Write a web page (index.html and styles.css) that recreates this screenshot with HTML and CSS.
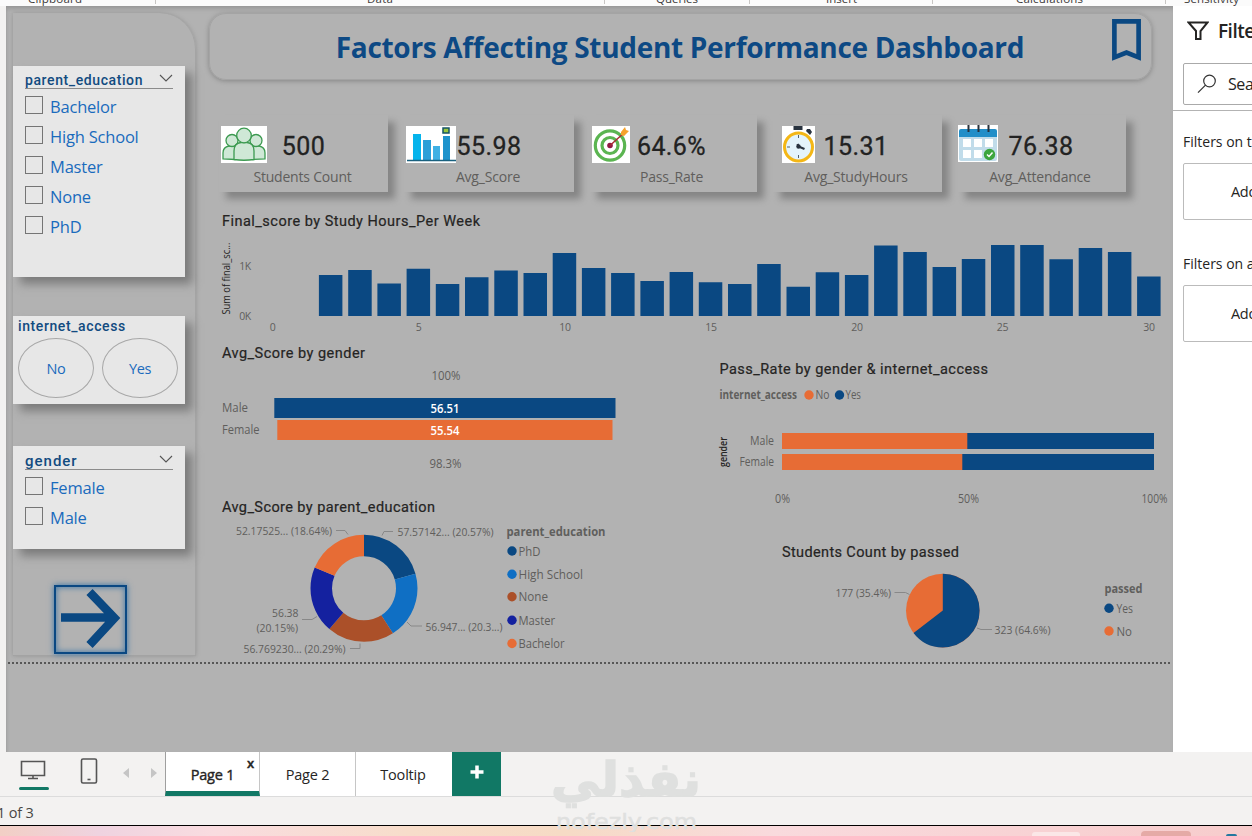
FILE: index.html
```html
<!DOCTYPE html>
<html lang="en">
<head>
<meta charset="utf-8">
<title>Factors Affecting Student Performance Dashboard</title>
<link rel="stylesheet" href="styles.css">
</head>
<body>
<div class="app">
  <svg class="ribbon" viewBox="0 0 1252 6">
    <g class="ribbon-text">
      <text x="28" y="2.500" textLength="54">Clipboard</text>
      <text x="367" y="2.500" textLength="26">Data</text>
      <text x="656" y="2.500" textLength="42">Queries</text>
      <text x="826" y="2.500" textLength="31">Insert</text>
      <text x="1016" y="2.500" textLength="67">Calculations</text>
      <text x="1184" y="2.500" textLength="55">Sensitivity</text>
    </g>
    <path class="ribbon-rule" d="M155.500 0V4M604.500 0V4M749.500 0V4M932.500 0V4M1165.500 0V4"/>
  </svg>

  <main class="workspace">
    <section class="canvas">
      <div class="page">
        <aside class="sidebar">
          <div class="slicer slicer-education">
            <div class="slicer-head"><h2>parent_education</h2>
              <svg class="chevron" viewBox="0 0 14 8"><path d="M1 1l6 6 6-6"/></svg></div>
            <label><i></i>Bachelor</label>
            <label><i></i>High School</label>
            <label><i></i>Master</label>
            <label><i></i>None</label>
            <label><i></i>PhD</label>
          </div>
          <div class="slicer slicer-internet">
            <h2>internet_access</h2>
            <div class="choices"><span>No</span><span>Yes</span></div>
          </div>
          <div class="slicer slicer-gender">
            <div class="slicer-head"><h2>gender</h2>
              <svg class="chevron" viewBox="0 0 14 8"><path d="M1 1l6 6 6-6"/></svg></div>
            <label><i></i>Female</label>
            <label><i></i>Male</label>
          </div>
          <div class="next">
            <svg viewBox="0 0 69 65"><path d="M5 30.500H57M33.500 5L58.500 31 33.500 58"/></svg>
          </div>
        </aside>

        <div class="report">
          <header class="banner">
            <h1>Factors Affecting Student Performance Dashboard</h1>
            <svg class="bookmark" viewBox="0 0 28 42" preserveAspectRatio="none"><path d="M2.300 2.300H25.700V37.500L14 32.800 2.300 37.500Z"/></svg>
          </header>

          <div class="kpis">
            <div class="kpi">
              <svg class="kpi-icon" width="46" height="37" viewBox="0 0 46 37">
                <rect width="46" height="37" fill="#fff"/>
                <g fill="#cfe8d6" stroke="#3c9a50" stroke-width="1.300">
                  <path d="M2 33V27q0-6 6-7h6v13.500zM44 33V27q0-6-6-7h-6v13.500z"/>
                  <circle cx="11" cy="14.500" r="6"/><circle cx="35" cy="14.500" r="6"/>
                  <path d="M13 33.500V25q0-8 7-8.500h6q7 .500 7 8.500v8.500q-10 1.500-20 0z"/>
                  <circle cx="23" cy="9.500" r="7.300"/>
                </g>
              </svg>
              <b>500</b><span>Students Count</span>
            </div>
            <div class="kpi">
              <svg class="kpi-icon" width="50" height="37" viewBox="0 0 50 37">
                <rect width="50" height="37" fill="#fff"/>
                <path d="M7 8h8v26H7z" fill="#05b4ec"/><path d="M17 14h8v20h-8z" fill="#2c9fd8"/>
                <path d="M27 20h7v14h-7z" fill="#3fb0e4"/><path d="M37 10h7v24h-7z" fill="#1e93cc"/>
                <path d="M1 34.500h49" stroke="#19617f" stroke-width="1.500"/>
                <path d="M37 2h6v5h-6z" fill="#9bc63b" stroke="#155365" stroke-width="1.500"/>
              </svg>
              <b>55.98</b><span>Avg_Score</span>
            </div>
            <div class="kpi kpi-rate">
              <svg class="kpi-icon" width="38" height="37" viewBox="0 0 38 37">
                <rect width="38" height="37" fill="#fff"/>
                <g fill="none" stroke="#5bb551"><circle cx="18" cy="19.500" r="14.700" stroke-width="3.200"/>
                <circle cx="18" cy="19.500" r="8" stroke-width="3.200"/></g>
                <circle cx="18" cy="19.500" r="2.800" fill="#8f1842"/>
                <path d="M18 19.500L33 6" stroke="#a92b32" stroke-width="1.500"/>
                <path d="M29 6l4-5 1 3 3 1-5 5-3-1z" fill="#f5a22b"/>
              </svg>
              <b>64.6%</b><span>Pass_Rate</span>
            </div>
            <div class="kpi kpi-hours">
              <svg class="kpi-icon" width="33" height="37" viewBox="0 0 33 37">
                <rect width="33" height="37" fill="#fff"/>
                <path d="M11.500 0h9v4h-9zM25 3l3 0 2 3-2 3-4-4z" fill="#29333f"/>
                <circle cx="16.500" cy="21" r="14" fill="#e4f4fb" stroke="#f4b716" stroke-width="3"/>
                <path d="M16.500 9v3M16.500 29v3M5 21h3" stroke="#56616b" stroke-width="1"/>
                <circle cx="16.500" cy="20.500" r="2.200" fill="#29333f"/>
                <path d="M15.500 18l1 2.500 6 2.500" fill="none" stroke="#29333f" stroke-width="2.200"/>
              </svg>
              <b>15.31</b><span>Avg_StudyHours</span>
            </div>
            <div class="kpi kpi-attendance">
              <svg class="kpi-icon" width="40" height="37" viewBox="0 0 40 37">
                <rect width="40" height="37" fill="#fff"/>
                <path d="M1 12h38v22q0 2-2 2H3q-2 0-2-2z" fill="#c1dcea"/>
                <path d="M1 12V6q0-2 2-2h34q2 0 2 2v6z" fill="#218ec8"/>
                <path d="M5 14h8v8H5zM16 14h8v8h-8zM27 14h8v8h-8zM5 25h8v8H5zM16 25h8v8h-8zM27 25h8v8h-8z" fill="#fff"/>
                <path d="M10.500 0v7M20.500 0v7M30.500 0v7" stroke="#28313b" stroke-width="2"/>
                <circle cx="31.500" cy="29.500" r="5.700" fill="#3da63e"/>
                <path d="M29 29.500l2 2 3.500-4" fill="none" stroke="#fff" stroke-width="1.500"/>
              </svg>
              <b>76.38</b><span>Avg_Attendance</span>
            </div>
          </div>

          <svg class="visual hours" viewBox="219 205 950 130">
            <text class="heading" x="222" y="226" textLength="258">Final_score by Study Hours_Per Week</text>
            <text class="axis-name" transform="translate(230 314.500) rotate(-90)" textLength="72" lengthAdjust="spacingAndGlyphs">Sum of final_sc...</text>
            <g class="tick">
              <text x="251" y="270" text-anchor="end">1K</text><text x="251" y="320" text-anchor="end">0K</text>
              <g text-anchor="middle"><text x="272.500" y="331">0</text><text x="418.500" y="331">5</text><text x="565" y="331">10</text>
              <text x="711" y="331">15</text><text x="857" y="331">20</text><text x="1002.500" y="331">25</text><text x="1149" y="331">30</text></g>
            </g>
            <path class="blue" d="M318.900 316V275h23.500v41zM348.200 316V270h23.500v46zM377.400 316V283.500h23.500v32.500zM406.600 316V268.700h23.500v47.300zM435.800 316V284h23.500v32zM465 316V277.300h23.500v38.700zM494.300 316V270.500h23.500v45.500zM523.500 316V273h23.500v43zM552.700 316V253h23.500v63zM581.900 316V268h23.500v48zM611.100 316V273h23.500v43zM640.400 316V281h23.500v35zM669.600 316V272h23.500v44zM698.800 316V282.300h23.500v33.700zM728 316V284h23.500v32zM757.200 316V264h23.500v52zM786.500 316V286.700h23.500v29.300zM815.700 316V272.300h23.500v43.700zM844.900 316V275h23.500v41zM874.100 316V245.500h23.500v70.500zM903.300 316V252h23.500v64zM932.600 316V267h23.500v49zM961.800 316V259h23.500v57zM991 316V245h23.500v71zM1020.200 316V245h23.500v71zM1049.400 316V259.300h23.500v56.700zM1078.700 316V248h23.500v68zM1107.900 316V252h23.500v64zM1137.100 316V276.500h23.500v39.500z"/>
          </svg>

          <div class="columns">
            <div class="column">
              <svg class="visual" width="481" height="155" viewBox="219 335 481 155">
                <text class="heading" x="222" y="358" textLength="143">Avg_Score by gender</text>
                <g class="label"><text x="431.500" y="380" textLength="29" lengthAdjust="spacingAndGlyphs">100%</text><text x="429.500" y="468" textLength="32" lengthAdjust="spacingAndGlyphs">98.3%</text>
                <text x="222" y="412" textLength="26" lengthAdjust="spacingAndGlyphs">Male</text><text x="222" y="434" textLength="37.500" lengthAdjust="spacingAndGlyphs">Female</text></g>
                <rect class="blue" x="274.300" y="398" width="341.200" height="20"/>
                <rect class="orange" x="277.300" y="420" width="335.200" height="20"/>
                <g class="value"><text x="430.500" y="412.500" textLength="29" lengthAdjust="spacingAndGlyphs">56.51</text><text x="430.500" y="434.500" textLength="29" lengthAdjust="spacingAndGlyphs">55.54</text></g>
              </svg>
              <svg class="visual" width="481" height="171" viewBox="219 490 481 171">
                <text class="heading" x="222" y="512" textLength="213">Avg_Score by parent_education</text>
                <g class="ring" transform="rotate(-90 364 588.300)">
                  <circle cx="364" cy="588.300" r="42.750" pathLength="100" stroke="#0a4882" stroke-dasharray="20.570 100"/>
                  <circle cx="364" cy="588.300" r="42.750" pathLength="100" stroke="#0f6fc4" stroke-dasharray="20.350 100" stroke-dashoffset="-20.570"/>
                  <circle cx="364" cy="588.300" r="42.750" pathLength="100" stroke="#ab5029" stroke-dasharray="20.290 100" stroke-dashoffset="-40.920"/>
                  <circle cx="364" cy="588.300" r="42.750" pathLength="100" stroke="#14219f" stroke-dasharray="20.150 100" stroke-dashoffset="-61.210"/>
                  <circle cx="364" cy="588.300" r="42.750" pathLength="100" stroke="#e76c35" stroke-dasharray="18.640 100" stroke-dashoffset="-81.360"/>
                </g>
                <path class="leader" d="M336 530.500h9l3 4M393 531.500h-9l-2 4M407 622l4 4h11M302 619.500h10l5-3M350 648.500h10v-5"/>
                <g class="callout">
                  <text x="236" y="535" textLength="96" lengthAdjust="spacingAndGlyphs">52.17525... (18.64%)</text>
                  <text x="397.500" y="536" textLength="96" lengthAdjust="spacingAndGlyphs">57.57142... (20.57%)</text>
                  <text x="425.500" y="631" textLength="77" lengthAdjust="spacingAndGlyphs">56.947... (20.3...)</text>
                  <text x="272" y="617" textLength="26.500" lengthAdjust="spacingAndGlyphs">56.38</text>
                  <text x="256.500" y="632" textLength="41.500" lengthAdjust="spacingAndGlyphs">(20.15%)</text>
                  <text x="243.500" y="653" textLength="102" lengthAdjust="spacingAndGlyphs">56.769230... (20.29%)</text>
                </g>
                <text class="legend-name" x="506.500" y="536" textLength="99" lengthAdjust="spacingAndGlyphs">parent_education</text>
                <g class="label"><text x="518.500" y="556" textLength="22" lengthAdjust="spacingAndGlyphs">PhD</text><text x="518.500" y="579" textLength="64.500" lengthAdjust="spacingAndGlyphs">High School</text>
                <text x="518.500" y="601" textLength="29.500" lengthAdjust="spacingAndGlyphs">None</text><text x="518.500" y="625" textLength="36.500" lengthAdjust="spacingAndGlyphs">Master</text><text x="518.500" y="648" textLength="46" lengthAdjust="spacingAndGlyphs">Bachelor</text></g>
                <circle class="blue" cx="512" cy="551" r="4.700"/><circle cx="512" cy="574.300" r="4.700" fill="#0f6fc4"/>
                <circle cx="512" cy="596.700" r="4.700" fill="#ab5029"/><circle cx="512" cy="620.300" r="4.700" fill="#14219f"/><circle class="orange" cx="512" cy="643.500" r="4.700"/>
              </svg>
            </div>
            <div class="column">
              <svg class="visual" width="469" height="180" viewBox="700 335 469 180">
                <text class="heading" x="719.500" y="374" textLength="268.500">Pass_Rate by gender &amp; internet_access</text>
                <text class="legend-name" x="719.500" y="399" textLength="77.500" lengthAdjust="spacingAndGlyphs">internet_access</text>
                <circle class="orange" cx="809" cy="395" r="4.700"/><circle class="blue" cx="839.500" cy="395" r="4.700"/>
                <g class="label"><text x="815.500" y="399" textLength="14" lengthAdjust="spacingAndGlyphs">No</text><text x="845.500" y="399" textLength="15.500" lengthAdjust="spacingAndGlyphs">Yes</text>
                <text x="750" y="445" textLength="24" lengthAdjust="spacingAndGlyphs">Male</text><text x="739.500" y="466" textLength="34.500" lengthAdjust="spacingAndGlyphs">Female</text>
                <text x="775" y="503" textLength="15" lengthAdjust="spacingAndGlyphs">0%</text><text x="958" y="503" textLength="21" lengthAdjust="spacingAndGlyphs">50%</text><text x="1141.500" y="503" textLength="26" lengthAdjust="spacingAndGlyphs">100%</text></g>
                <text class="axis-name axis-gender" transform="translate(727 467) rotate(-90)" textLength="30" lengthAdjust="spacingAndGlyphs">gender</text>
                <path class="orange" d="M782 433h186v16H782zM782 454h181v16H782z"/>
                <path class="blue" d="M967.300 433H1154v16H967.300zM962.300 454H1154v16H962.300z"/>
              </svg>
              <svg class="visual" width="469" height="146" viewBox="700 515 469 146">
                <text class="heading" x="782" y="557" textLength="177">Students Count by passed</text>
                <circle class="orange" cx="942.800" cy="610.600" r="36.800"/>
                <circle cx="942.800" cy="610.600" r="18.400" fill="none" stroke="#0a4882" stroke-width="36.800" pathLength="100" stroke-dasharray="64.600 100" transform="rotate(-90 942.800 610.600)"/>
                <path class="leader" d="M894.500 592.500h11l4 2M977 628l4 1.500h11"/>
                <g class="callout"><text x="835.500" y="597" textLength="55.500" lengthAdjust="spacingAndGlyphs">177 (35.4%)</text>
                <text x="994.500" y="634" textLength="56" lengthAdjust="spacingAndGlyphs">323 (64.6%)</text></g>
                <text class="legend-name" x="1104.500" y="593" textLength="38" lengthAdjust="spacingAndGlyphs">passed</text>
                <circle class="blue" cx="1109" cy="608.300" r="4.700"/><circle class="orange" cx="1109" cy="631" r="4.700"/>
                <g class="label"><text x="1116.500" y="613" textLength="16.500" lengthAdjust="spacingAndGlyphs">Yes</text><text x="1116.500" y="636" textLength="15.500" lengthAdjust="spacingAndGlyphs">No</text></g>
              </svg>
            </div>
          </div>
        </div>
      </div>
    </section>

    <aside class="filters">
      <div class="filters-title">
        <svg width="22" height="20" viewBox="0 0 22 20"><path d="M1.500 1.500h19l-7 8.500v8h-4.500v-8z"/></svg>
        <strong>Filters</strong>
      </div>
      <div class="search">
        <svg width="20" height="20" viewBox="0 0 20 20"><circle cx="12.500" cy="7" r="5.800"/><path d="M8.500 11.200L1 18.700"/></svg>
        <span>Search</span>
      </div>
      <p class="filters-label">Filters on this page</p>
      <div class="dropzone">Add data fields here</div>
      <p class="filters-label filters-label-all">Filters on all pages</p>
      <div class="dropzone">Add data fields here</div>
    </aside>
  </main>

  <nav class="tabs">
    <div class="views">
      <svg width="32" height="40" viewBox="0 0 32 40"><path class="stroke" d="M4.500 9.500h23v14h-23zM16 23.500v3M11 26.500h10"/><path class="underline" d="M3.500 36.500h27"/></svg>
      <svg width="18" height="28" viewBox="0 0 18 28"><rect class="stroke" x="1.500" y="2" width="15" height="24" rx="1.500"/><path class="stroke" d="M7.500 22.500h3"/></svg>
      <svg width="34" height="12" viewBox="0 0 34 12"><path class="arrow" d="M6 1v10L0 6zM28 1v10l6-5z"/></svg>
    </div>
    <div class="tab active">Page 1<em>x</em></div>
    <div class="tab">Page 2</div>
    <div class="tab tooltip-tab">Tooltip</div>
    <div class="add"><svg width="14" height="14" viewBox="0 0 14 14"><path d="M7 0.500v13M0.500 7h13"/></svg></div>
  </nav>
  <footer class="status">1 of 3</footer>
  <div class="taskbar"><i class="task-pill"></i><i class="task-button"></i><i class="task-app"></i></div>

  <svg class="watermark" width="160" height="80" viewBox="545 752 160 80">
    <text class="mark" x="551" y="796" textLength="150" lengthAdjust="spacingAndGlyphs">نفذلي</text>
    <text class="site" x="556" y="829" textLength="141" lengthAdjust="spacingAndGlyphs">nofezly.com</text>
  </svg>
</div>
</body>
</html>
```
FILE: styles.css
```css
* { box-sizing: border-box; }
body { margin: 0; background: #f3f2f1; font-family: "Open Sans", "Noto Sans", sans-serif; color: #252423; }
h1, h2, p { margin: 0; }
svg { display: block; flex: none; }
.app { position: relative; width: 1252px; height: 836px; overflow: hidden; display: flex; flex-direction: column; }

.ribbon { width: 1252px; height: 6px; background: #fbfbfb; }
.ribbon-text { font-size: 11.500px; fill: #3b3a39; }
.ribbon-rule { stroke: #c8c6c4; }

.workspace { display: flex; height: 746px; flex: none; }
.canvas { width: 1167px; margin-left: 6px; background: #b2b2b2; box-shadow: inset 0 5px 5px -3px #929292, inset 3px 0 3px -2px #a3a3a3; }
.page { display: flex; height: 658px; margin-left: 2px; width: 1162px; border-bottom: 2px dotted #575757; }

/* Slicer column */
.sidebar { width: 183px; height: 643px; margin: 7px 0 0 5px; padding-top: 53px; border-radius: 0 36px 0 0; border-right: 1px solid #a4a4a4; border-bottom: 1px solid #a3a3a3; box-shadow: 0 0 4px #959595; flex: none; }
.slicer { width: 172px; background: #e7e7e7; box-shadow: 7px 7px 9px #7c7c7c; }
.slicer h2 { font: 500 14px/18px Roboto, sans-serif; color: #124b80; letter-spacing: .6px; }
.slicer-education { height: 211px; padding: 5px 12px; }
.slicer-internet { height: 88px; margin-top: 39px; padding: 1px 5px; }
.slicer-gender { height: 103px; margin-top: 42px; padding: 6px 12px; }
.slicer-gender h2 { font-size: 15px; letter-spacing: 1px; }
.slicer-head { display: flex; justify-content: space-between; height: 18px; border-bottom: 1px solid #8b8b8b; margin-bottom: 2px; }
.chevron { width: 14px; height: 8px; margin-top: 3px; fill: none; stroke: #555; stroke-width: 1.100; }
.slicer label { display: flex; align-items: center; height: 30px; font-size: 16.500px; letter-spacing: -.2px; color: #1a6bbd; gap: 7px; }
.slicer label i { width: 18px; height: 18px; border: 1px solid #757575; margin-top: -2px; }
.choices { display: flex; gap: 8px; margin-top: 3px; }
.choices span { width: 76px; height: 60px; border: 1.500px solid #a8a8a8; border-radius: 50%; display: grid; place-items: center; font-size: 14.500px; color: #1a6bbd; letter-spacing: -.4px; }
.next { width: 73px; height: 69px; margin: 36px 0 0 41px; border: 2px solid #0a4882; box-shadow: 0 0 6px #3775a8, inset 0 0 6px #3775a8; }
.next svg { width: 69px; height: 65px; fill: none; stroke: #0a4882; stroke-width: 8.500; }

/* Report area */
.report { width: 950px; margin-left: 23px; flex: none; }
.banner { display: flex; justify-content: center; position: relative; width: 943px; height: 67px; margin: 7px 0 0 -10px; border-radius: 17px; border: 1px solid #a4a4a4; box-shadow: 0 1px 5px #858585; }
.banner h1 { font-size: 28px; line-height: 66px; font-weight: 700; color: #0d4984; white-space: nowrap; letter-spacing: -.32px; margin-left: -1px; }
.bookmark { position: absolute; right: 10px; top: 5px; width: 29px; height: 43px; fill: none; stroke: #0a4882; stroke-width: 4.500; }
.kpis { display: grid; grid-template-columns: 169px 170px 167px 169px 168px; column-gap: 16px; margin-top: 35px; }
.kpi { position: relative; height: 77px; display: flex; flex-direction: column; align-items: center; background: #b2b2b2; box-shadow: 7px 7px 7px #858585; }
.kpi b { font: 400 25px/30px Roboto, sans-serif; letter-spacing: .4px; margin-top: 17px; color: #222; -webkit-text-stroke: .3px #222; }
.kpi span { font-size: 14px; line-height: 20px; margin-top: 5px; margin-left: -2px; color: #605e5c; letter-spacing: -.2px; }
.kpi-icon { position: absolute; left: 2px; top: 11px; }
.kpi-rate b, .kpi-rate span { margin-left: -4px; }
.kpi-hours .kpi-icon { left: 9px; }
.kpi-hours b, .kpi-hours span { margin-left: -3px; }
.kpi-attendance .kpi-icon { left: 0; top: 10px; }
.kpi-attendance b { margin-left: -2px; }
.kpi-attendance span { margin-left: -4px; }
.hours { width: 950px; height: 130px; margin-top: 13px; }
.columns { display: flex; }

.heading { font: 400 14.500px Roboto, sans-serif; fill: #252423; stroke: #252423; stroke-width: .2; }
.axis-name { font: 500 10px "Open Sans", sans-serif; fill: #252423; }
.axis-gender { font-weight: 600; }
.tick { font-size: 10.500px; fill: #605e5c; letter-spacing: -.3px; }
.label { font-size: 12px; fill: #605e5c; }
.callout { font-size: 11.500px; fill: #605e5c; }
.value { font-size: 12px; font-weight: 600; fill: #fff; }
.legend-name { font-size: 12px; font-weight: 700; fill: #605f5d; }
.leader { fill: none; stroke: #888; }
.ring { fill: none; stroke-width: 21.500; }
.blue { fill: #0a4882; }
.orange { fill: #e76c35; }

/* Filters pane */
.filters { width: 79px; background: #fff; overflow: hidden; white-space: nowrap; }
.filters-title { display: flex; align-items: center; gap: 9px; height: 50px; padding-left: 14px; }
.filters-title strong { font-size: 19px; font-weight: 600; letter-spacing: -.5px; }
.filters-title svg { fill: none; stroke: #252423; stroke-width: 2; }
.search { display: flex; align-items: center; gap: 11px; width: 190px; height: 42px; margin: 7px 0 0 10px; padding-left: 13px; border: 1px solid #aaa; border-radius: 2px; font-size: 16px; letter-spacing: -.4px; }
.search svg { fill: none; stroke: #333; stroke-width: 1.200; }
.filters-label { margin-top: 5px; border-top: 1px solid #b3b3b3; padding: 20px 0 0 10px; font-size: 14px; line-height: 22px; letter-spacing: 0; }
.filters-label-all { margin-top: 33px; border: 0; padding-top: 0; }
.dropzone { width: 190px; height: 57px; margin: 10px 0 0 10px; border: 1px solid #bbb; border-radius: 2px; padding-left: 47px; line-height: 56px; font-size: 14.500px; letter-spacing: -.3px; }

/* Page tabs and status */
.tabs { display: flex; height: 45px; flex: none; background: #f3f2f1; border-bottom: 1px solid #dcdcdc; font-size: 14.500px; }
.views { display: flex; align-items: flex-start; width: 165px; padding-left: 17px; }
.views svg:nth-child(2) { margin: 5px 0 0 31px; }
.views svg:nth-child(3) { margin: 15px 0 0 25px; }
.stroke { fill: none; stroke: #555; stroke-width: 1.600; }
.underline { stroke: #117865; stroke-width: 3; stroke-linecap: round; }
.arrow { fill: #c5c5c5; }
.tab { width: 96px; height: 44px; display: grid; place-items: center; background: #fff; border-right: 1px solid #c6c6c6; letter-spacing: -.2px; }
.active { position: relative; width: 95px; border-left: 1px solid #9f9f9f; border-bottom: 5px solid #117865; padding-top: 5px; -webkit-text-stroke: .4px #252423; }
.active em { position: absolute; right: 5px; top: 2px; font-style: normal; font-size: 13px; font-weight: 600; }
.tooltip-tab { border: 0; padding-right: 2px; }
.add { width: 49px; height: 44px; background: #117865; display: grid; place-items: center; padding-bottom: 4px; }
.add path { stroke: #fff; stroke-width: 3.500; }
.status { height: 28px; flex: none; font-size: 14.500px; line-height: 31px; letter-spacing: -.2px; text-indent: -3px; color: #484644; }
.taskbar { height: 11px; position: relative; border-top: 1px solid #000; background: linear-gradient(90deg, #f2cfc5, #efd3e0 8%, #f9dce0 17%, #f7ddca 33%, #f6dbc5 45%, #f9dadd 62%, #f7cccc); }
.taskbar i { position: absolute; bottom: 0; }
.task-pill { left: 1032px; width: 48px; height: 4px; background: #fbe7e7; border-radius: 3px 3px 0 0; }
.task-button { left: 1141px; width: 50px; height: 5px; background: #e5aaa6; border-radius: 4px 4px 0 0; }
.task-app { left: 1226px; width: 11px; height: 2px; background: #24789f; border-radius: 4px 4px 0 0; }
.watermark { position: absolute; left: 545px; top: 752px; fill: #dfe0df; }
.mark { font: 700 48px "DejaVu Sans", sans-serif; stroke: #dfe0df; stroke-width: 1.500; }
.site { font: 400 22px "DejaVu Sans", sans-serif; stroke: #dfe0df; stroke-width: .5; }
```
